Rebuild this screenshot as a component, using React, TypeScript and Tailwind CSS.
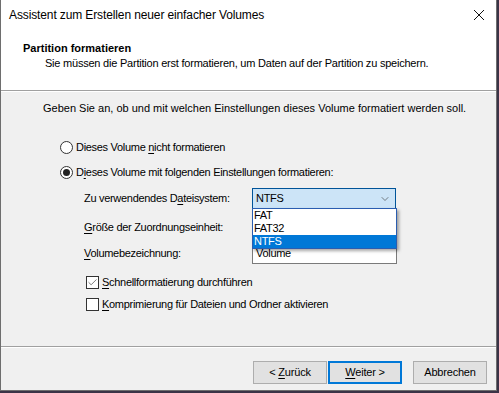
import { Check, ChevronDown } from 'lucide-react'

const font = { fontFamily: '"Liberation Sans", Arial, sans-serif' }

function U({ children }: { children: string }) {
  return <span className="underline underline-offset-[2px] decoration-[1px]">{children}</span>
}

function Radio({ checked, children }: { checked?: boolean; children: React.ReactNode }) {
  return (
    <div className="flex items-center h-[13px]">
      <span className="w-[13px] h-[13px] rounded-full border border-[#333] bg-white flex items-center justify-center">
        {checked && <span className="w-[7px] h-[7px] rounded-full bg-[#222]" />}
      </span>
      <span className="ml-[3px] tracking-[-0.3px]">{children}</span>
    </div>
  )
}

function Checkbox({ checked, children }: { checked?: boolean; children: React.ReactNode }) {
  return (
    <div className="flex items-center h-[13px]">
      <span className="w-[13px] h-[13px] border border-[#333] bg-white flex items-center justify-center">
        {checked && <Check size={11} strokeWidth={1.4} className="text-[#333]" />}
      </span>
      <span className="ml-[3px] tracking-[-0.3px]">{children}</span>
    </div>
  )
}

function Button({ children, focused }: { children: React.ReactNode; focused?: boolean }) {
  return (
    <button
      className={
        focused
          ? 'w-[74px] h-[23px] bg-[#e1e1e1] border-2 border-[#0078d7] text-[11px] text-black tracking-[-0.2px]'
          : 'w-[74px] h-[23px] bg-[#e1e1e1] border border-[#adadad] text-[11px] text-black tracking-[-0.2px]'
      }
      style={font}>
      {children}
    </button>
  )
}

export default function App() {
  return (
    <div className="w-[499px] h-[393px] bg-[#3a3346] overflow-hidden">
      <div className="w-[497px] h-[391px] border-x border-b border-[#6e6e6e] bg-[#f0f0f0] flex flex-col text-[11px] leading-[13px] text-black" style={font}>
        {/* title bar */}
        <div className="h-[30px] bg-white flex items-center justify-between pl-[8px] pr-[10px]">
          <span className="text-[12px] tracking-[-0.12px]">Assistent zum Erstellen neuer einfacher Volumes</span>
          <svg width="12" height="12" viewBox="0 0 12 12" className="mr-[1px]">
            <path d="M1 1 L11 11 M11 1 L1 11" stroke="#111" strokeWidth="1" />
          </svg>
        </div>

        {/* header */}
        <div className="h-[60px] bg-white pl-[22px] pt-[12px]">
          <p className="font-bold">Partition formatieren</p>
          <p className="ml-[22px] mt-[2px] tracking-[-0.22px]">Sie müssen die Partition erst formatieren, um Daten auf der Partition zu speichern.</p>
        </div>
        <div className="h-px bg-[#a0a0a0]" />
        <div className="h-px bg-white" />

        {/* body */}
        <div className="pl-[42px] pt-[10px] h-[254px]">
          <p>Geben Sie an, ob und mit welchen Einstellungen dieses Volume formatiert werden soll.</p>

          <div className="ml-[17px] mt-[26px]">
            <Radio>Dieses Volume <U>n</U>icht formatieren</Radio>
            <div className="mt-[12px]">
              <Radio checked>D<U>i</U>eses Volume mit folgenden Einstellungen formatieren:</Radio>
            </div>
          </div>

          <div className="ml-[41px] mt-[9px] w-[355px] tracking-[-0.3px]">
            <div className="flex items-center h-[21px]">
              <span className="w-[168px]">Zu verwendendes D<U>a</U>teisystem:</span>
              <div className="relative">
                <div className="w-[144px] h-[21px] bg-[#cce4f7] border border-[#005499] flex items-center justify-between pl-[3px] pr-[4px]">
                  <span>NTFS</span>
                  <ChevronDown size={12} strokeWidth={1.2} className="text-[#333]" />
                </div>
                <div className="absolute left-0 top-[20px] w-[145px] bg-white border border-[#2a5db0] shadow-[2px_2px_3px_rgba(0,0,0,0.35)] z-10">
                  <div className="h-[13px] pl-[1px] leading-[13px]">FAT</div>
                  <div className="h-[13px] pl-[1px] leading-[13px]">FAT32</div>
                  <div className="h-[13px] pl-[1px] leading-[13px] bg-[#0078d7] text-white">NTFS</div>
                </div>
              </div>
            </div>

            <div className="flex items-center h-[21px] mt-[8px]">
              <span className="w-[168px]"><U>G</U>röße der Zuordnungseinheit:</span>
              <div className="w-[144px] h-[21px] bg-[#e1e1e1] border border-[#adadad]" />
            </div>

            <div className="flex items-center h-[21px] mt-[5px]">
              <span className="w-[168px]"><U>V</U>olumebezeichnung:</span>
              <div className="w-[145px] h-[21px] bg-white border border-[#7a7a7a] flex items-center pl-[3px]">Volume</div>
            </div>
          </div>

          <div className="ml-[43px] mt-[12px]">
            <Checkbox checked><U>S</U>chnellformatierung durchführen</Checkbox>
            <div className="mt-[9px]">
              <Checkbox><U>K</U>omprimierung für Dateien und Ordner aktivieren</Checkbox>
            </div>
          </div>
        </div>

        <div className="h-px bg-[#a0a0a0]" />
        <div className="h-px bg-white" />

        {/* buttons */}
        <div className="flex justify-end pr-[9px] pt-[13px]">
          <div className="flex gap-[1px]">
            <Button>&lt; <U>Z</U>urück</Button>
            <Button focused><U>W</U>eiter &gt;</Button>
          </div>
          <div className="ml-[11px]">
            <Button>Abbrechen</Button>
          </div>
        </div>
      </div>
    </div>
  )
}
